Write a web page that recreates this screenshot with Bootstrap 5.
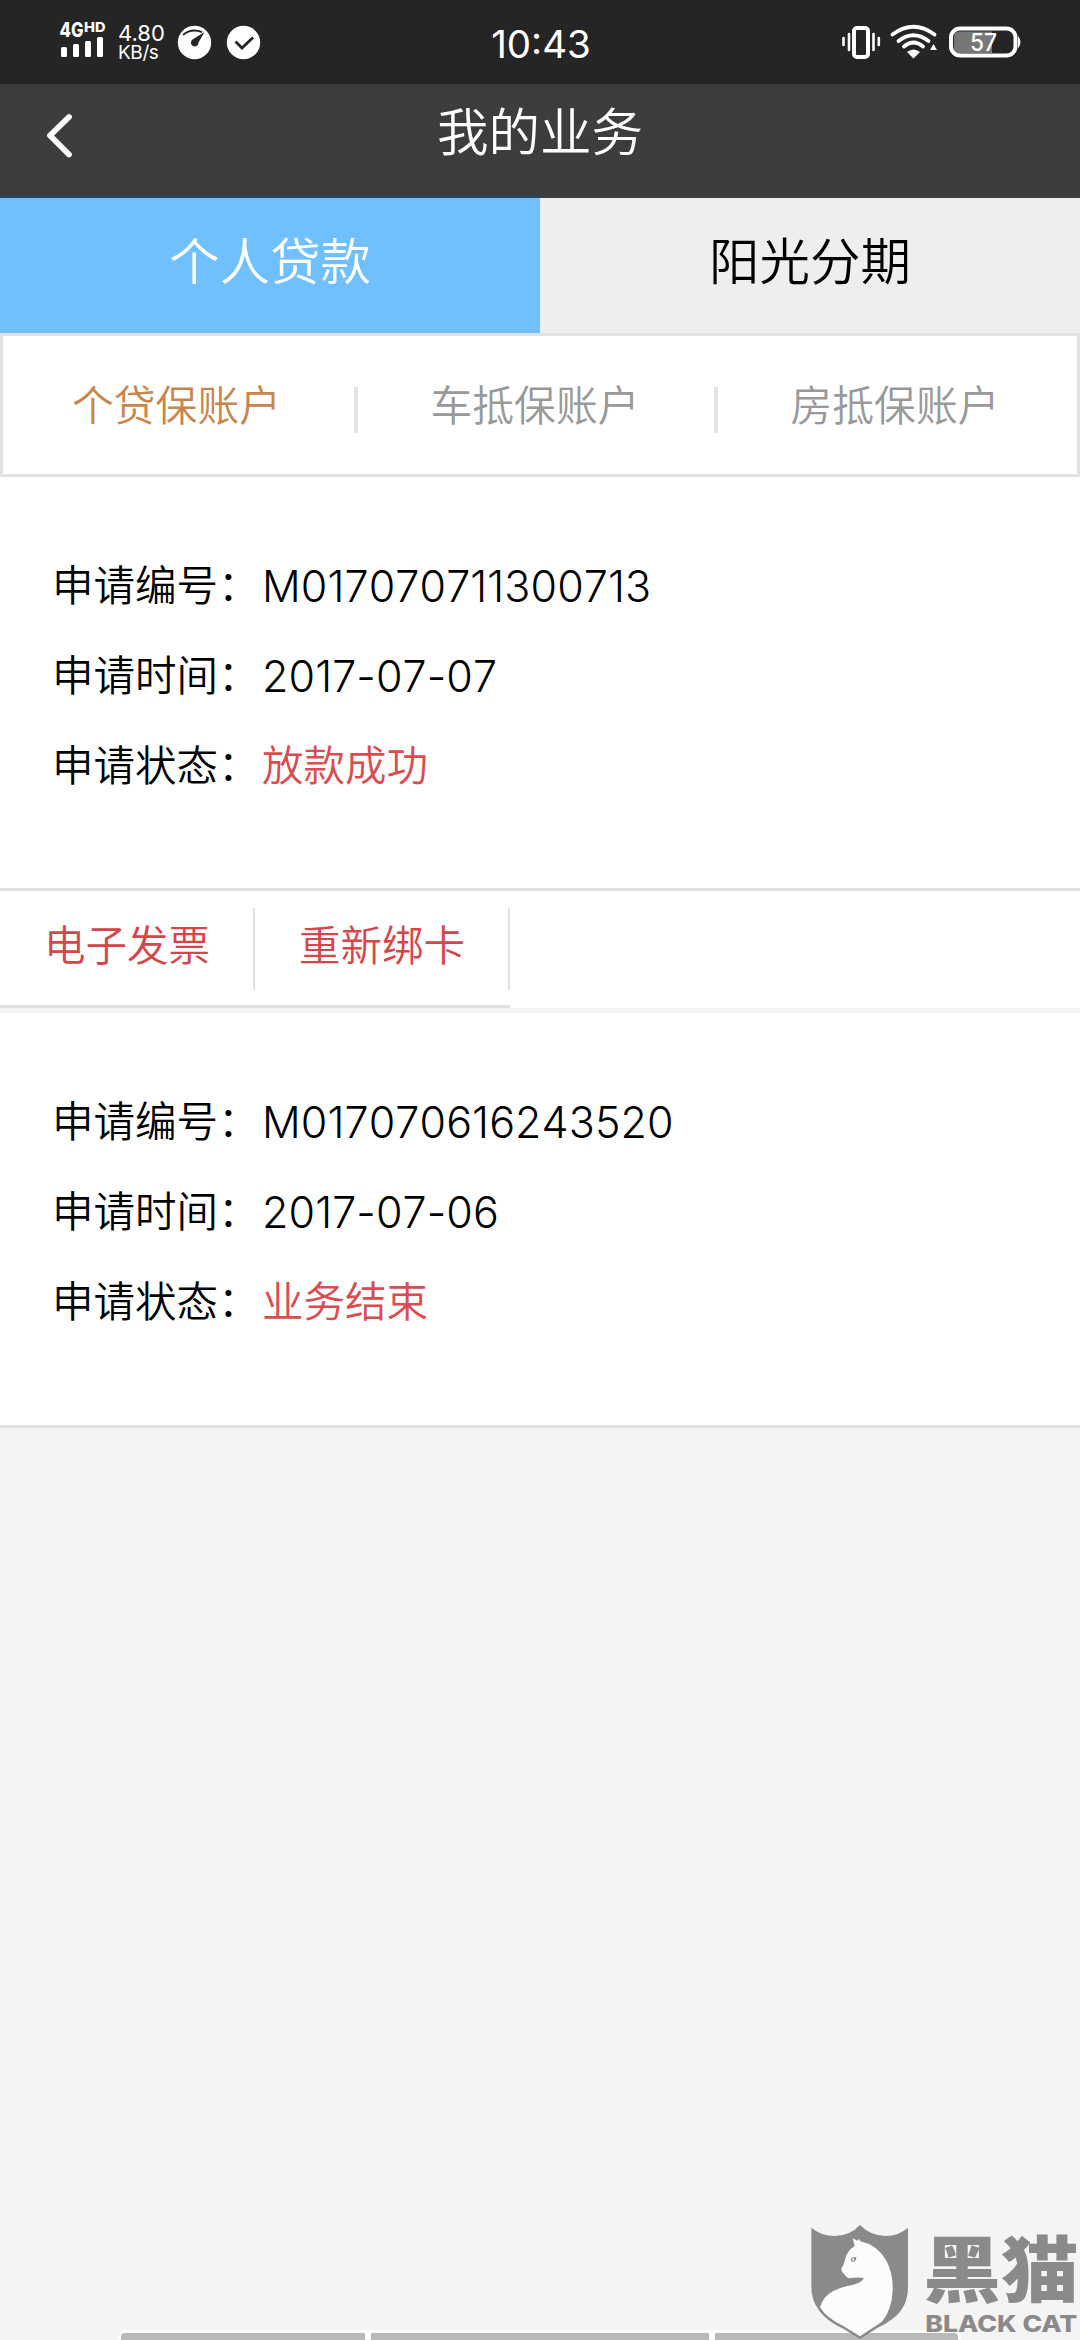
<!DOCTYPE html>
<html lang="zh-CN">
<head>
    <meta charset="UTF-8">
    <meta name="viewport" content="width=device-width, initial-scale=1.0">
    <title>我的业务</title>
    <link rel="stylesheet" href="https://cdn.jsdelivr.net/npm/bootstrap@5.3.0/dist/css/bootstrap.min.css">
    <style>
        body {
            font-family: Inter, "Noto Sans CJK SC", sans-serif;
            font-weight: 350;
            color: #000;
            background: #f4f4f4;
        }
        .screen { height: 2340px; }

        /* Status bar */
        .status-bar { height: 84px; background: #252525; color: #fff; }
        .status-side { flex: 1 1 0; }
        .status-left { padding-left: 59px; }
        .status-right { padding-right: 57px; }
        .clock { font-size: 38.5px; font-weight: 400; line-height: 84px; padding-top: 2px; }
        .net-speed { font-weight: 400; margin: 2px 0 0 12px; width: 59px; }
        .net-speed .amount { font-size: 22px; line-height: 20px; }
        .net-speed .unit { font-size: 19px; line-height: 20px; letter-spacing: -.4px; }

        /* Title bar */
        .title-bar { height: 114px; background: #3d3d3d; color: #fff; }
        .title-bar h1 { font-size: 51.5px; font-weight: 350; line-height: 96px; }
        .back-btn { left: 42px; top: 28px; }

        /* Product tabs */
        .product-tabs .nav-link {
            height: 135px;
            padding: 0;
            border-radius: 0;
            font-size: 50.5px;
            line-height: 127px;
            color: #000;
            background: #eee;
        }
        .product-tabs .nav-link.active { color: #fff; background: #70bfff; box-shadow: 0 -3px 0 #2b465b; }

        /* Account tabs */
        .account-tabs { height: 144px; border: 3px solid #e2e2e2; font-size: 41.8px; }
        .account-tabs a { flex: 0 0 356px; padding: 1px 2px 0 0; line-height: 138px; color: #999; }
        .account-tabs a.current { flex-basis: 351px; padding-right: 4px; color: #c8854d; }
        .account-tabs .split { width: 4px; height: 46px; background: #e4e4e4; margin-top: 10px; }

        /* Applications */
        .loan { padding: 64px 52px 0; font-size: 41.5px; border-bottom: 3px solid #e0e0e0; }
        .loan dl { line-height: 90px; }
        .loan dt { width: 210px; font-weight: 350; }
        .loan .num { font-size: 43px; font-weight: 300; font-kerning: none; letter-spacing: .1px; }
        .loan .state { color: #dc4b4d; }
        .loan-actions { height: 117px; }
        .loan-actions .action-group { border-bottom: 3px solid #e0e0e0; }
        .loan-actions a {
            height: 82px;
            margin-top: 17px;
            padding: 0 43px 0 44px;
            font-size: 41.5px;
            line-height: 77px;
            color: #d64547;
            border-right: 2px solid #e0e0e0;
        }
        .gap-strip { height: 5px; background: #f4f4f4; }

        /* System navigation */
        .sys-nav { left: 121px; bottom: 0; width: 837px; height: 7px; gap: 6px; }
        .sys-nav span { background: #b9b9b9; box-shadow: 0 0 0 3px #fbfbfb; }
        .sys-nav span:first-child { width: 244px; border-top-left-radius: 4px; }
        .sys-nav span:nth-child(2) { width: 338px; }
        .sys-nav span:last-child { width: 243px; border-top-right-radius: 4px; }
        .cat-logo { right: 0; bottom: 0; }
    </style>
</head>
<body>
<div class="screen position-relative overflow-hidden d-flex flex-column">
    <header class="status-bar d-flex">
        <div class="status-side status-left d-flex align-items-center">
            <svg width="47" height="84" viewBox="59 0 47 84" fill="#fff">
                <text x="59.5" y="37" font-size="20" font-weight="800" textLength="24" lengthAdjust="spacingAndGlyphs">4G</text>
                <text x="84" y="32" font-size="13.5" font-weight="800" textLength="21.500" lengthAdjust="spacingAndGlyphs">HD</text>
                <rect x="61" y="47" width="6" height="10" rx="1.500"/>
                <rect x="73" y="44" width="6" height="13" rx="1.500"/>
                <rect x="85" y="41" width="6" height="16" rx="1.500"/>
                <rect x="97" y="37" width="6" height="20" rx="1.500"/>
            </svg>
            <div class="net-speed">
                <div class="amount">4.80</div>
                <div class="unit">KB/s</div>
            </div>
            <svg width="84" height="84" viewBox="177 0 84 84">
                <circle cx="194.500" cy="42.500" r="16.700" fill="#fff"/>
                <path d="M183 35Q191 28 202 32" fill="none" stroke="#252525" stroke-width="2"/>
                <path d="M204.500 32L198.500 42.500A3.800 3.800 0 1 1 192.500 39.500Z" fill="#252525"/>
                <circle cx="243.500" cy="42.500" r="16.700" fill="#fff"/>
                <path d="M235.500 41.500L242 48L253 37.500" fill="none" stroke="#252525" stroke-width="2.800"/>
            </svg>
        </div>
        <div class="clock">10:43</div>
        <div class="status-side status-right d-flex justify-content-end">
            <svg width="182" height="84" viewBox="840 0 182 84" fill="none" stroke="#fff">
                <rect x="853" y="28" width="14" height="29" rx="3" stroke-width="4"/>
                <path d="M842.500 38V45M848 34V50M872.500 34V50M877.800 38V45" stroke-width="2.600" stroke-linecap="round"/>
                <path d="M891.500 34.500Q912.500 19 933.500 34.500M897.500 41Q912.500 29.500 927.500 41M903 46.500Q912.500 38.500 922 46.500" stroke-width="3.800" stroke-linecap="round"/>
                <path d="M906 52Q912.500 47 919 52L912.500 58.500Z" fill="#fff" stroke="none"/>
                <path d="M929 50L932.500 44L936 50Z" fill="#fff" stroke="none"/>
                <path d="M958 31.500H991V53H958Q953 53 953 48V37Q953 31.500 958 31.500Z" fill="#777" stroke="none"/>
                <rect x="950" y="28.500" width="64.500" height="27" rx="9" stroke-width="4"/>
                <path d="M1017 36Q1022 42 1017 48.500Z" fill="#fff" stroke="none"/>
                <text x="969" y="50.500" font-size="24" font-weight="500" fill="#fff" stroke="none" textLength="27" lengthAdjust="spacingAndGlyphs">57</text>
            </svg>
        </div>
    </header>

    <nav class="title-bar position-relative text-center">
        <a href="#" class="back-btn position-absolute d-block lh-1" aria-label="返回">
            <svg width="34" height="48" viewBox="42 112 34 48" fill="none" stroke="#fff" stroke-width="5.800" stroke-linecap="round" stroke-linejoin="round">
                <path d="M69 117L50 135.500L69 154.500"/>
            </svg>
        </a>
        <h1 class="m-0">我的业务</h1>
    </nav>

    <div class="product-tabs nav nav-pills nav-fill position-relative">
        <a class="nav-link active w-50" href="#">个人贷款</a>
        <a class="nav-link w-50" href="#">阳光分期</a>
    </div>

    <div class="account-tabs d-flex align-items-center bg-white text-center">
        <a class="current text-decoration-none" href="#">个贷保账户</a>
        <span class="split flex-shrink-0"></span>
        <a class="text-decoration-none" href="#">车抵保账户</a>
        <span class="split flex-shrink-0"></span>
        <a class="text-decoration-none" href="#">房抵保账户</a>
    </div>

    <section class="loan bg-white" style="height: 414px">
        <dl class="m-0">
            <div class="d-flex"><dt>申请编号：</dt><dd class="m-0 num">M017070711300713</dd></div>
            <div class="d-flex"><dt>申请时间：</dt><dd class="m-0 num">2017-07-07</dd></div>
            <div class="d-flex"><dt>申请状态：</dt><dd class="m-0 state">放款成功</dd></div>
        </dl>
    </section>
    <div class="loan-actions d-flex bg-white">
        <div class="action-group d-flex">
            <a class="text-decoration-none" href="#">电子发票</a>
            <a class="text-decoration-none" href="#">重新绑卡</a>
        </div>
    </div>
    <div class="gap-strip"></div>
    <section class="loan bg-white" style="height: 415px">
        <dl class="m-0">
            <div class="d-flex"><dt>申请编号：</dt><dd class="m-0 num">M017070616243520</dd></div>
            <div class="d-flex"><dt>申请时间：</dt><dd class="m-0 num">2017-07-06</dd></div>
            <div class="d-flex"><dt>申请状态：</dt><dd class="m-0 state">业务结束</dd></div>
        </dl>
    </section>

    <div class="sys-nav position-absolute d-flex"><span></span><span></span><span></span></div>

    <svg class="cat-logo position-absolute" width="300" height="150" viewBox="0 0 900 450">
        <path d="M94 113Q124 138 164 138Q210 138 240 105Q272 138 318 138Q355 138 384 113V290Q384 350 340 385Q318 402 290 415L240 448L190 416Q94 372 94 290Z" fill="#8b8989"/>
        <path d="M218 145L232 152L237 147L241 154Q290 164 318 210Q340 250 338 300Q336 360 305 396L240 439L190 408Q140 385 120 352Q130 318 160 303Q185 290 220 284Q245 278 252 264Q228 261 208 265Q197 262 193 253Q183 245 184 236Q193 222 196 205Q202 182 224 168Z" fill="#fcfcfc"/>
        <path d="M212 208Q219 198 229 202Q229 213 220 217Q213 215 212 208Z" fill="#8b8989"/>
        <path d="M220 202L223 209L220 216L217 209Z" fill="#fcfcfc"/>
        <g fill="#8b8989" font-weight="900">
            <text x="430" y="317" font-size="214" textLength="466" lengthAdjust="spacingAndGlyphs">黑猫</text>
            <text x="436" y="427" font-size="68" font-weight="800" textLength="456" lengthAdjust="spacingAndGlyphs">BLACK CAT</text>
        </g>
    </svg>
</div>

<script src="https://cdn.jsdelivr.net/npm/bootstrap@5.3.0/dist/js/bootstrap.bundle.min.js"></script>
</body>
</html>
